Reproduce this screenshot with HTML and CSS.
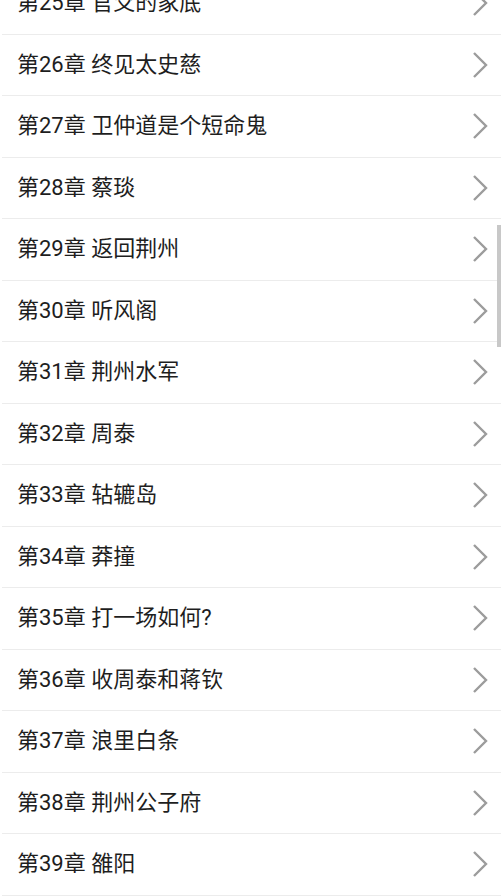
FILE: index.html
```html
<!DOCTYPE html>
<html lang="zh-CN">
<head>
    <meta charset="UTF-8">
    <meta name="viewport" content="width=device-width, initial-scale=1.0">
    <title>目录</title>
    <link rel="stylesheet" href="styles.css">
</head>
<body>
    <div class="chapter-list">
        <div class="chapter-row"><span class="chapter-title">第25章 官爻的家底</span><svg class="chevron" viewBox="0 0 16 28"><polyline points="2,2 14,14 2,26"/></svg></div>
        <div class="chapter-row"><span class="chapter-title">第26章 终见太史慈</span><svg class="chevron" viewBox="0 0 16 28"><polyline points="2,2 14,14 2,26"/></svg></div>
        <div class="chapter-row"><span class="chapter-title">第27章 卫仲道是个短命鬼</span><svg class="chevron" viewBox="0 0 16 28"><polyline points="2,2 14,14 2,26"/></svg></div>
        <div class="chapter-row"><span class="chapter-title">第28章 蔡琰</span><svg class="chevron" viewBox="0 0 16 28"><polyline points="2,2 14,14 2,26"/></svg></div>
        <div class="chapter-row"><span class="chapter-title">第29章 返回荆州</span><svg class="chevron" viewBox="0 0 16 28"><polyline points="2,2 14,14 2,26"/></svg></div>
        <div class="chapter-row"><span class="chapter-title">第30章 听风阁</span><svg class="chevron" viewBox="0 0 16 28"><polyline points="2,2 14,14 2,26"/></svg></div>
        <div class="chapter-row"><span class="chapter-title">第31章 荆州水军</span><svg class="chevron" viewBox="0 0 16 28"><polyline points="2,2 14,14 2,26"/></svg></div>
        <div class="chapter-row"><span class="chapter-title">第32章 周泰</span><svg class="chevron" viewBox="0 0 16 28"><polyline points="2,2 14,14 2,26"/></svg></div>
        <div class="chapter-row"><span class="chapter-title">第33章 轱辘岛</span><svg class="chevron" viewBox="0 0 16 28"><polyline points="2,2 14,14 2,26"/></svg></div>
        <div class="chapter-row"><span class="chapter-title">第34章 莽撞</span><svg class="chevron" viewBox="0 0 16 28"><polyline points="2,2 14,14 2,26"/></svg></div>
        <div class="chapter-row"><span class="chapter-title">第35章 打一场如何?</span><svg class="chevron" viewBox="0 0 16 28"><polyline points="2,2 14,14 2,26"/></svg></div>
        <div class="chapter-row"><span class="chapter-title">第36章 收周泰和蒋钦</span><svg class="chevron" viewBox="0 0 16 28"><polyline points="2,2 14,14 2,26"/></svg></div>
        <div class="chapter-row"><span class="chapter-title">第37章 浪里白条</span><svg class="chevron" viewBox="0 0 16 28"><polyline points="2,2 14,14 2,26"/></svg></div>
        <div class="chapter-row"><span class="chapter-title">第38章 荆州公子府</span><svg class="chevron" viewBox="0 0 16 28"><polyline points="2,2 14,14 2,26"/></svg></div>
        <div class="chapter-row"><span class="chapter-title">第39章 雒阳</span><svg class="chevron" viewBox="0 0 16 28"><polyline points="2,2 14,14 2,26"/></svg></div>
    </div>
    <div class="scroll-thumb"></div>
</body>
</html>
```

FILE: styles.css
```css
html, body {
    margin: 0;
    padding: 0;
    background: #fff;
    overflow: hidden;
}

body {
    font-family: Roboto, "Noto Sans CJK SC", sans-serif;
    color: #1e1e1e;
}

.chapter-list {
    margin: -27px 3px 0 2px;
}

.chapter-row {
    display: flex;
    align-items: center;
    justify-content: space-between;
    height: 60.5px;
    padding: 0 13px 0 15px;
    border-bottom: 1px solid #ececec;
}

.chapter-title {
    font-size: 22px;
    line-height: 1;
}

.chevron {
    width: 16px;
    height: 28px;
    fill: none;
    stroke: #9c9c9c;
    stroke-width: 2.4;
}

.scroll-thumb {
    position: fixed;
    top: 225px;
    right: 3px;
    width: 4px;
    height: 122px;
    background: #c8c8c8;
}
```
